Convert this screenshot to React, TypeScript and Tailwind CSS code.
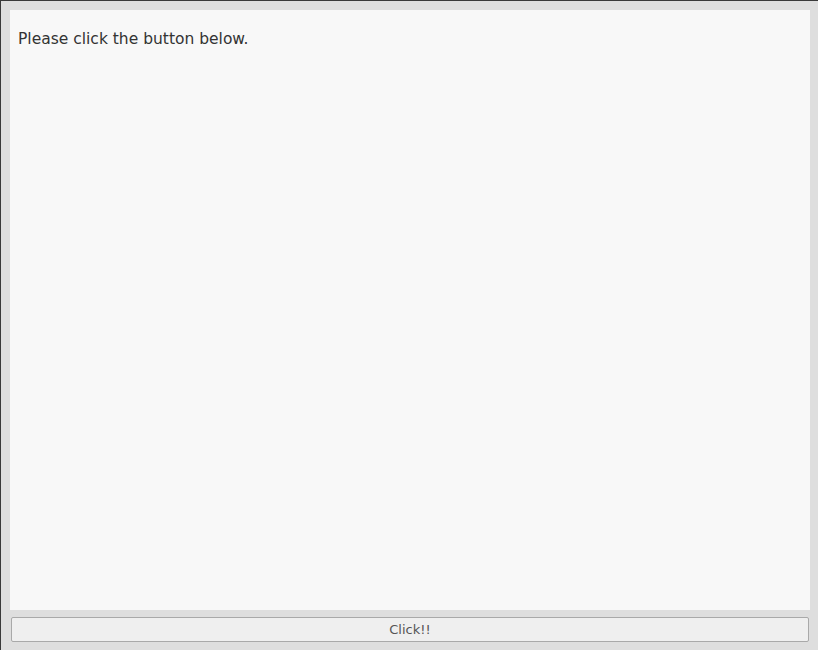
export default function App() {
  return (
    <div className="w-[818px] h-[650px] bg-[#dedede] border-t border-l border-[#3a3a3a] flex flex-col pl-[9px] pr-[8px] pt-[9px] pb-[8px] font-['DejaVu_Sans',sans-serif]">
      {/* Output panel */}
      <div className="flex-1 bg-[#f8f8f8] px-[8px] pt-[19px]">
        <p className="text-[15.5px] leading-[20px] text-[#333]">Please click the button below.</p>
      </div>

      {/* Button */}
      <button className="mt-[7px] ml-[1px] mr-[1px] h-[25px] rounded-[2px] border border-[#a9a9a9] bg-[#efefef] text-[13px] text-[#555]">
        Click!!
      </button>
    </div>
  );
}
